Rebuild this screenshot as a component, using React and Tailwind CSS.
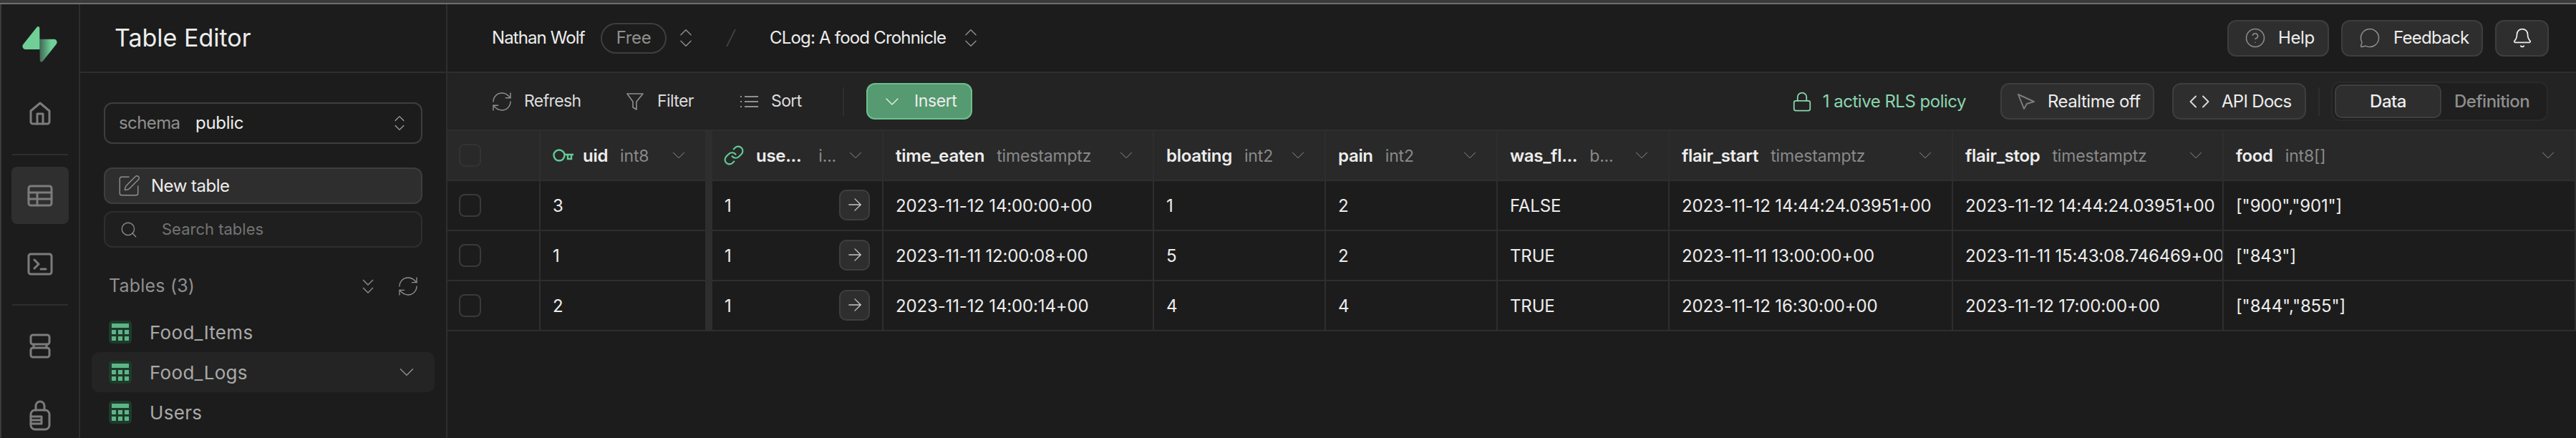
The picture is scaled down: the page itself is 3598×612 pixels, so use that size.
import React from "react";
import {
  ChevronDown,
  ChevronsUpDown,
  RefreshCw,
  ArrowRight,
  Search,
  Code,
  HelpCircle,
  MessageCircle,
  Bell,
  Lock,
  SquarePen,
  Link,
} from "lucide-react";

const columns = [
  { name: "uid", type: "int8", w: "w-[232px]", icon: "key" },
  { name: "use...", type: "i...", w: "w-[239px]", icon: "link" },
  { name: "time_eaten", type: "timestamptz", w: "w-[378px]" },
  { name: "bloating", type: "int2", w: "w-[240px]" },
  { name: "pain", type: "int2", w: "w-[240px]" },
  { name: "was_fl...", type: "b...", w: "w-[240px]" },
  { name: "flair_start", type: "timestamptz", w: "w-[396px]" },
  { name: "flair_stop", type: "timestamptz", w: "w-[378px]" },
  { name: "food", type: "int8[]", w: "flex-1" },
];

const rows = [
  ["3", "1", "2023-11-12 14:00:00+00", "1", "2", "FALSE", "2023-11-12 14:44:24.03951+00", "2023-11-12 14:44:24.03951+00", '["900","901"]'],
  ["1", "1", "2023-11-11 12:00:08+00", "5", "2", "TRUE", "2023-11-11 13:00:00+00", "2023-11-11 15:43:08.746469+00", '["843"]'],
  ["2", "1", "2023-11-12 14:00:14+00", "4", "4", "TRUE", "2023-11-12 16:30:00+00", "2023-11-12 17:00:00+00", '["844","855"]'],
];

function Logo() {
  return (
    <svg width="49" height="50" viewBox="0 0 109 113" fill="none">
      <path d="M63.7 110.3C60.8 113.9 55 111.9 55 107.3L54 40.1H99.2C107.4 40.1 112 49.5 106.9 55.9L63.7 110.3Z" fill="url(#logo-fade)" />
      <path d="M45.3 2.1C48.2-1.5 54 .4 54 5L54.5 72.3H9.8C1.6 72.3-2.9 62.8 2.2 56.4L45.3 2.1Z" fill="#6fcf97" />
      <defs>
        <linearGradient id="logo-fade" x1="54" y1="60" x2="90" y2="60" gradientUnits="userSpaceOnUse">
          <stop stopColor="#3f6653" />
          <stop offset="1" stopColor="#6fcf97" />
        </linearGradient>
      </defs>
    </svg>
  );
}

function RailIcon({ children, w = 36, h = 32, vb = "0 0 36 32" }) {
  return (
    <svg width={w} height={h} viewBox={vb} fill="none" stroke="#7c7c7c" strokeWidth="3" strokeLinejoin="round" strokeLinecap="round">
      {children}
    </svg>
  );
}

function GreenTable() {
  return (
    <svg width="32" height="32" viewBox="0 0 32 32" className="shrink-0">
      <rect width="32" height="32" rx="5" fill="#1e3a2c" />
      <rect x="4" y="4" width="24" height="6" fill="#5db585" />
      <rect x="4" y="13" width="6" height="6" fill="#5db585" />
      <rect x="13" y="13" width="6" height="6" fill="#5db585" />
      <rect x="22" y="13" width="6" height="6" fill="#5db585" />
      <rect x="4" y="22" width="6" height="6" fill="#5db585" />
      <rect x="13" y="22" width="6" height="6" fill="#5db585" />
      <rect x="22" y="22" width="6" height="6" fill="#5db585" />
    </svg>
  );
}

function Rail() {
  return (
    <div className="w-[110px] shrink-0 border-r-2 border-[#2e2e2e] flex flex-col items-center pt-[31px] pr-[1px]">
      <Logo />
      <div className="mt-[55px]">
        <RailIcon w={30} h={33} vb="0 0 30 33">
          <path d="M2 13L15 2l13 11v15a3 3 0 0 1-3 3H5a3 3 0 0 1-3-3z" />
          <path d="M11 31V17h8v14" />
        </RailIcon>
      </div>
      <div className="w-[78px] h-[2px] bg-[#2e2e2e] mt-[40px]" />
      <div className="w-[80px] h-[80px] mt-[16px] rounded-[8px] bg-[#2f2f2f] flex items-center justify-center">
        <RailIcon w={36} h={31} vb="0 0 36 31">
          <rect x="2" y="2" width="32" height="27" rx="3" />
          <path d="M2 11h32M2 20h32M14 11v18" />
        </RailIcon>
      </div>
      <div className="mt-[40px]">
        <RailIcon w={36} h={32}>
          <rect x="2" y="2" width="32" height="28" rx="3" />
          <path d="M10 10l6 6-6 6M19 23h7" />
        </RailIcon>
      </div>
      <div className="w-[78px] h-[2px] bg-[#2e2e2e] mt-[40px]" />
      <div className="mt-[39px]">
        <RailIcon w={30} h={35} vb="0 0 30 35">
          <rect x="2" y="2" width="26" height="13" rx="3" />
          <rect x="2" y="20" width="26" height="13" rx="3" />
          <path d="M6 15v5M24 15v5" />
        </RailIcon>
      </div>
      <div className="mt-[57px]">
        <RailIcon w={30} h={44} vb="0 0 30 44">
          <path d="M9 15V9a6 6 0 0 1 12 0v6" />
          <rect x="2" y="15" width="26" height="27" rx="6" />
          <path d="M2 24h15v10H2M2 29h15" />
        </RailIcon>
      </div>
    </div>
  );
}

function TableRow({ name, active }) {
  return (
    <div className={`h-[56px] mx-[16px] pl-[24px] pr-[22px] rounded-[10px] flex items-center ${active ? "bg-[#242424]" : ""}`}>
      <GreenTable />
      <span className="ml-[25px] text-[26px] text-[#a9a9a9] tracking-[0.3px] flex-1">{name}</span>
      {active && <ChevronDown size={34} strokeWidth={1} className="text-[#8f8f8f]" />}
    </div>
  );
}

function Sidebar() {
  return (
    <div className="w-[513px] shrink-0 border-r-2 border-[#2e2e2e] flex flex-col">
      <div className="h-[96px] shrink-0 border-b-2 border-[#2e2e2e] pl-[48px] flex items-center">
        <span className="text-[34px] text-[#ededed] relative top-[-1px]">Table Editor</span>
      </div>
      <div className="px-[33px] pt-[41px]">
        <div className="h-[58px] rounded-[12px] border-2 border-[#3e3e3e] flex items-center pl-[19px] pr-[16px]">
          <span className="text-[24px] text-[#8f8f8f] tracking-[-0.6px] w-[107px]">schema</span>
          <span className="text-[24px] text-[#ededed] tracking-[-0.3px] flex-1">public</span>
          <ChevronsUpDown size={28} strokeWidth={1.1} className="text-[#a0a0a0]" />
        </div>
        <div className="h-[51px] mt-[33px] rounded-[12px] border-2 border-[#3e3e3e] bg-[#2e2e2e] flex items-center pl-[16px]">
          <SquarePen size={34} strokeWidth={1} className="text-[#8f8f8f]" />
          <span className="ml-[14px] text-[24px] text-[#ededed] tracking-[-0.5px]">New table</span>
        </div>
        <div className="h-[51px] mt-[10px] rounded-[12px] border-2 border-[#2e2e2e] bg-[#1f1f1f] flex items-center pl-[20px]">
          <Search size={26} strokeWidth={1.2} className="text-[#8f8f8f]" />
          <span className="ml-[33px] text-[22px] text-[#737373]">Search tables</span>
        </div>
      </div>
      <div className="h-[34px] mt-[37px] pl-[40px] pr-[37px] flex items-center">
        <span className="text-[25px] text-[#8f8f8f] tracking-[0.2px] flex-1">Tables (3)</span>
        <svg width="16" height="21" viewBox="0 0 16 21" fill="none" stroke="#8f8f8f" strokeWidth="1.3">
          <path d="M1 1l7 7 7-7M1 12l7 7 7-7" />
        </svg>
        <RefreshCw size={32} strokeWidth={1} className="ml-[32px] text-[#8f8f8f]" />
      </div>
      <div className="mt-[19px]">
        <TableRow name="Food_Items" />
        <TableRow name="Food_Logs" active />
        <TableRow name="Users" />
      </div>
    </div>
  );
}

function TopButton({ children, className = "" }) {
  return (
    <div className={`h-[51px] rounded-[12px] border-2 border-[#3e3e3e] bg-[#2e2e2e] flex items-center ${className}`}>
      {children}
    </div>
  );
}

function Topbar() {
  return (
    <div className="h-[96px] shrink-0 border-b-2 border-[#2e2e2e] pl-[62px] pr-[38px] flex items-center text-[24px]">
      <span className="text-[#ededed] tracking-[-0.9px] w-[136px]">Nathan Wolf</span>
      <span className="ml-[16px] w-[92px] h-[43px] rounded-full border-2 border-[#3e3e3e] flex items-center justify-center text-[#8f8f8f] tracking-[-0.4px]">Free</span>
      <ChevronsUpDown size={34} strokeWidth={1} className="ml-[10px] text-[#8f8f8f]" />
      <svg width="14" height="26" viewBox="0 0 14 26" className="ml-[39px]">
        <path d="M13 1L1 25" stroke="#3e3e3e" strokeWidth="2" />
      </svg>
      <span className="ml-[47px] text-[#ededed] tracking-[-0.8px] w-[254px] whitespace-nowrap">CLog: A food Crohnicle</span>
      <ChevronsUpDown size={34} strokeWidth={1} className="ml-[10px] text-[#8f8f8f]" />
      <div className="flex-1" />
      <TopButton className="w-[142px] pl-[22px]">
        <HelpCircle size={30} strokeWidth={1.2} className="text-[#8f8f8f]" />
        <span className="ml-[17px] text-[#ededed] tracking-[-0.4px]">Help</span>
      </TopButton>
      <TopButton className="w-[198px] ml-[17px] pl-[23px]">
        <MessageCircle size={30} strokeWidth={1.2} className="text-[#8f8f8f]" />
        <span className="ml-[18px] text-[#ededed] tracking-[-0.7px]">Feedback</span>
      </TopButton>
      <TopButton className="w-[75px] ml-[17px] justify-center">
        <Bell size={30} strokeWidth={1.4} className="text-[#ededed]" />
      </TopButton>
    </div>
  );
}

function Toolbar() {
  return (
    <div className="h-[81px] shrink-0 bg-[#232323] border-b-2 border-[#2e2e2e] pl-[60px] pr-[39px] flex items-center text-[24px]">
      <RefreshCw size={32} strokeWidth={1.1} className="text-[#8f8f8f]" />
      <span className="ml-[15px] w-[80px] text-[23px] text-[#dcdcdc] tracking-[-0.6px]">Refresh</span>
      <svg width="24" height="24" viewBox="0 0 24 24" fill="none" stroke="#8f8f8f" strokeWidth="1.6" className="ml-[63px]">
        <path d="M1 1h22L14 12v11l-5-3V12z" strokeLinejoin="round" />
      </svg>
      <span className="ml-[19px] w-[54px] text-[23px] text-[#dcdcdc] tracking-[-0.6px]">Filter</span>
      <svg width="25" height="18" viewBox="0 0 25 18" fill="none" stroke="#8f8f8f" strokeWidth="2" className="ml-[62px]">
        <path d="M6 2h19M6 9h19M6 16h19M0 2h2M0 9h2M0 16h2" />
      </svg>
      <span className="ml-[18px] w-[44px] text-[23px] text-[#dcdcdc] tracking-[-0.6px]">Sort</span>
      <div className="w-[2px] h-[40px] bg-[#2e2e2e] ml-[56px]" />
      <div className="ml-[31px] w-[148px] h-[51px] rounded-[12px] border-2 border-[#6cc08e] bg-[#559a70] flex items-center pl-[18px]">
        <ChevronDown size={32} strokeWidth={1} className="text-[#ededed]" />
        <span className="ml-[15px] text-[23px] text-[#ededed] tracking-[-0.4px]">Insert</span>
      </div>
      <div className="flex-1" />
      <Lock size={30} strokeWidth={1.4} className="text-[#8ad6ae]" />
      <span className="ml-[14px] text-[#8ad6ae] tracking-[-0.5px]">1 active RLS policy</span>
      <TopButton className="ml-[48px] w-[215px] pl-[22px]">
        <svg width="24" height="22" viewBox="0 0 24 22" fill="none" stroke="#7c7c7c" strokeWidth="2" strokeLinejoin="round">
          <path d="M1 1l22 10-10 3-4 7z" />
        </svg>
        <span className="ml-[18px] text-[#ededed] tracking-[-0.5px]">Realtime off</span>
      </TopButton>
      <TopButton className="ml-[25px] w-[187px] pl-[21px]">
        <Code size={30} strokeWidth={1.5} className="text-[#dcdcdc]" />
        <span className="ml-[16px] text-[#ededed] tracking-[-0.7px]">API Docs</span>
      </TopButton>
      <div className="w-[2px] h-[40px] bg-[#2e2e2e] ml-[17px]" />
      <div className="ml-[16px] w-[303px] h-[55px] rounded-[12px] border-2 border-[#2a2a2a] bg-[#1f1f1f] flex items-center pl-[3px]">
        <div className="w-[149px] h-[47px] rounded-[10px] border-2 border-[#3e3e3e] bg-[#2e2e2e] flex items-center justify-center text-[#ededed] font-medium tracking-[-0.5px]">Data</div>
        <span className="ml-[18px] text-[#8f8f8f] font-medium tracking-[-0.5px]">Definition</span>
      </div>
    </div>
  );
}

function Checkbox({ dim }) {
  return <div className={`w-[31px] h-[32px] rounded-[8px] border-2 ${dim ? "border-[#333333]" : "border-[#3a3a3a]"}`} />;
}

function HeaderCell({ col }) {
  return (
    <div className={`${col.w} h-full shrink-0 border-r-2 border-[#2e2e2e] pl-[17px] pr-[22px] flex items-center`}>
      {col.icon === "key" && (
        <svg width="30" height="20" viewBox="0 0 30 20" fill="none" stroke="#63cb94" strokeWidth="2.4" className="mr-[12px]">
          <circle cx="9" cy="10" r="7.5" />
          <path d="M17 9h12M21 9v6h5V9" />
        </svg>
      )}
      {col.icon === "link" && <Link size={30} strokeWidth={1.7} className="text-[#63cb94] -ml-[2px] mr-[16px]" />}
      <span className="pt-[2px] text-[24px] font-semibold text-[#ededed] tracking-[-0.3px]">{col.name}</span>
      <span className={`pt-[2px] ${col.icon === "link" ? "ml-[24px]" : "ml-[17px]"} text-[23px] text-[#8a8a8a] tracking-[-0.15px]`}>{col.type}</span>
      <div className="flex-1" />
      <ChevronDown size={30} strokeWidth={0.8} className="text-[#8f8f8f]" />
    </div>
  );
}

function DataTable() {
  return (
    <div>
      <div className="h-[70px] flex bg-[#292929] border-b-2 border-[#2e2e2e]">
        <div className="w-[130px] h-full shrink-0 border-r-2 border-[#2e2e2e] pl-[16px] flex items-center">
          <Checkbox dim />
        </div>
        <HeaderCell col={columns[0]} />
        <div className="w-[8px] h-full shrink-0 bg-[#2e2e2e]" />
        {columns.slice(1).map((col) => (
          <HeaderCell key={col.name} col={col} />
        ))}
      </div>
      {rows.map((row, i) => (
        <div key={i} className="h-[70px] flex border-b-2 border-[#2e2e2e]">
          <div className="w-[130px] h-full shrink-0 border-r-2 border-[#2e2e2e] pl-[16px] flex items-center">
            <Checkbox />
          </div>
          {row.map((value, j) => (
            <React.Fragment key={j}>
              {j === 1 && <div className="w-[8px] h-full shrink-0 bg-[#2e2e2e]" />}
              <div className={`${columns[j].w} h-full shrink-0 border-r-2 border-[#2e2e2e] pl-[17px] flex items-center text-[24px] text-[#ededed] tracking-[-0.15px] whitespace-nowrap overflow-hidden`}>
                <span className="flex-1 pt-[2px]">{value}</span>
                {j === 1 && (
                  <div className="w-[43px] h-[43px] mr-[17px] rounded-[10px] border-2 border-[#3e3e3e] bg-[#2e2e2e] flex items-center justify-center relative top-[-1px]">
                    <ArrowRight size={28} strokeWidth={1.1} className="text-[#c8c8c8]" />
                  </div>
                )}
              </div>
            </React.Fragment>
          ))}
        </div>
      ))}
    </div>
  );
}

export default function App() {
  return (
    <div className="w-[3598px] h-[612px] overflow-hidden bg-[#1c1c1c] flex flex-col [font-family:Inter,sans-serif]">
      <div className="h-[6px] shrink-0 bg-[#3a3a3a] border-b-2 border-[#6e6e6e]" />
      <div className="flex-1 flex border-l-2 border-[#3a3a3a] min-h-0">
        <Rail />
        <Sidebar />
        <div className="flex-1 min-w-0 flex flex-col">
          <Topbar />
          <Toolbar />
          <DataTable />
        </div>
      </div>
    </div>
  );
}
